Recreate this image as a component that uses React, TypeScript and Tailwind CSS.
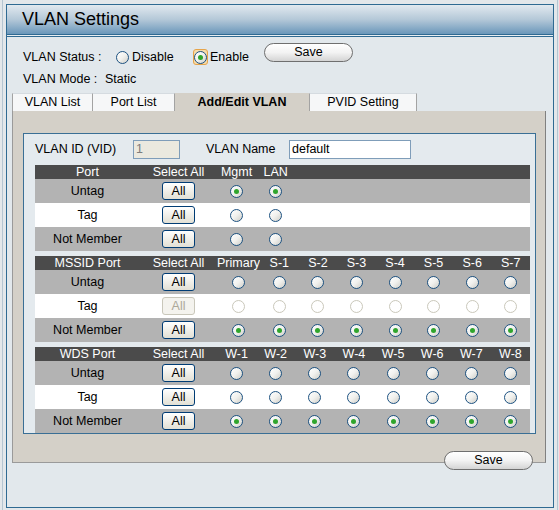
import React from "react";

type RadioState = "on" | "off" | "dis";

function Radio({ state }: { state: RadioState }) {
  if (state === "dis") {
    return <span className="block w-[13px] h-[13px] rounded-full border border-[#cac8bb] bg-white" />;
  }
  return (
    <span className="flex w-[13px] h-[13px] items-center justify-center rounded-full border border-[#1d5281] bg-linear-to-br from-white via-[#f1f1ee] to-[#cfcec8]">
      {state === "on" && <span className="block w-[5px] h-[5px] rounded-full bg-[#2fa52c]" />}
    </span>
  );
}

function AllButton({ disabled }: { disabled?: boolean }) {
  return (
    <button
      className={`w-[33px] h-[18px] rounded-[3px] border text-[12.5px] leading-[16px] ${
        disabled
          ? "border-[#c9c7ba] bg-[#f4f3ee] text-[#aca899]"
          : "border-[#003c74] bg-linear-to-b from-white to-[#e2e0d5] text-black"
      }`}
      disabled={disabled}
    >
      All
    </button>
  );
}

function SaveButton({ className = "" }: { className?: string }) {
  return (
    <button
      className={`w-[89px] h-[19px] rounded-full border border-[#6f6f6f] bg-linear-to-b from-white via-[#f3f3f3] to-[#d4d4d4] text-[12.5px] leading-[17px] text-black ${className}`}
    >
      Save
    </button>
  );
}

const sections: { title: string; cols: string[]; rows: { label: string; state: RadioState }[] }[] = [
  {
    title: "Port",
    cols: ["Mgmt", "LAN"],
    rows: [
      { label: "Untag", state: "on" },
      { label: "Tag", state: "off" },
      { label: "Not Member", state: "off" },
    ],
  },
  {
    title: "MSSID Port",
    cols: ["Primary", "S-1", "S-2", "S-3", "S-4", "S-5", "S-6", "S-7"],
    rows: [
      { label: "Untag", state: "off" },
      { label: "Tag", state: "dis" },
      { label: "Not Member", state: "on" },
    ],
  },
  {
    title: "WDS Port",
    cols: ["W-1", "W-2", "W-3", "W-4", "W-5", "W-6", "W-7", "W-8"],
    rows: [
      { label: "Untag", state: "off" },
      { label: "Tag", state: "off" },
      { label: "Not Member", state: "on" },
    ],
  },
];

function Section({ s, first }: { s: (typeof sections)[number]; first?: boolean }) {
  const blanks = Array.from({ length: 8 - s.cols.length });
  return (
    <div className={`grid w-[495px] grid-cols-[105px_77px_repeat(8,1fr)] ${first ? "" : "mt-[5px]"}`}>
      <div className="h-[14px] bg-[#4b4b4b] text-center leading-[15px] text-white">{s.title}</div>
      <div className="h-[14px] bg-[#4b4b4b] text-center leading-[15px] text-white">Select All</div>
      {s.cols.map((c) => (
        <div key={c} className="h-[14px] bg-[#4b4b4b] text-center leading-[15px] text-white">
          {c}
        </div>
      ))}
      {blanks.map((_, i) => (
        <div key={"h" + i} className="h-[14px] bg-[#4b4b4b]" />
      ))}
      {s.rows.map((r, ri) => {
        const bg = ri === 1 ? "bg-white" : "bg-[#b3b3b3]";
        return (
          <React.Fragment key={r.label}>
            <div className={`h-[24px] ${bg} flex items-center justify-center`}>{r.label}</div>
            <div className={`h-[24px] ${bg} flex items-center justify-center`}>
              <AllButton disabled={r.state === "dis"} />
            </div>
            {s.cols.map((c) => (
              <div key={c} className={`h-[24px] ${bg} flex items-center justify-center`}>
                <Radio state={r.state} />
              </div>
            ))}
            {blanks.map((_, i) => (
              <div key={"b" + i} className={`h-[24px] ${bg}`} />
            ))}
          </React.Fragment>
        );
      })}
    </div>
  );
}

export default function App() {
  return (
    <div className="w-[559px] h-[510px] overflow-hidden bg-[#e3e7ea] font-['Liberation_Sans',Arial,sans-serif] text-[12.5px] text-black">
      <div className="ml-[2px] mr-[1px] h-full border-x border-[#b5c5d1] px-[3px] pt-[4px]">
        <div className="flex h-[504px] flex-col border border-[#2f6a92] bg-[#e2e8ec]">
          <div className="flex h-[29px] items-center bg-linear-to-b from-[#e2e9ef] via-[#b4c8d8] to-[#6a97ba] pl-[15px] text-[18px]">
            VLAN Settings
          </div>
          <div className="h-[1px] bg-[#2f6a92]" />
          <div className="h-[1px] bg-[#e8eef2]" />
          <div className="h-[1px] bg-[#2f6a92]" />

          <div className="mt-[6px] flex h-[24px] items-start pl-[16px]">
            <div className="mt-[6px] flex h-[16px] items-center">
              <span className="w-[93px]">VLAN Status :</span>
              <span className="flex w-[77px] items-center">
                <Radio state="off" />
                <span className="ml-[3px]">Disable</span>
              </span>
              <span className="flex w-[71px] items-center">
                <span className="flex h-[16px] w-[15px] items-center justify-center rounded-[3px] border border-[#e6a44a] bg-[#f7dcaa]">
                  <Radio state="on" />
                </span>
                <span className="ml-[2px]">Enable</span>
              </span>
            </div>
            <SaveButton />
          </div>

          <div className="mt-[4px] flex h-[16px] items-center pl-[16px]">
            <span className="w-[82px]">VLAN Mode :</span>
            <span>Static</span>
          </div>

          <div className="mt-[6px] ml-[5px] flex h-[18px]">
            <div className="flex w-[81px] items-center justify-center border-x border-t border-[#a3a3a3] border-t-[#d5dbe0] bg-[#f6f7f8]">
              VLAN List
            </div>
            <div className="flex w-[82px] items-center justify-center border-r border-t border-[#a3a3a3] border-t-[#d5dbe0] bg-[#f6f7f8]">
              Port List
            </div>
            <div className="flex w-[134px] items-center justify-center bg-[#d4d0c8] font-bold">Add/Edit VLAN</div>
            <div className="flex w-[108px] items-center justify-center border-x border-t border-[#a3a3a3] border-t-[#d5dbe0] bg-[#f6f7f8]">
              PVID Setting
            </div>
          </div>

          <div className="ml-[5px] w-[534px] border-x border-b border-[#9a9a9a] border-r-[#808080] bg-[#d4d0c8] pt-[22px] pb-[28px] pl-[10px]">
            <div className="w-[513px] border border-[#3a6f95] bg-[#e4eaee] pt-[6px] pl-[11px]">
              <div className="flex h-[19px] items-center">
                <span className="w-[98px]">VLAN ID (VID)</span>
                <span className="flex h-[19px] w-[47px] items-center border border-[#7f9db9] bg-[#ebe9df] pl-[2px] text-[#7d7d7d]">
                  1
                </span>
                <span className="ml-[26px] w-[83px]">VLAN Name</span>
                <span className="flex h-[19px] w-[122px] items-center border border-[#7f9db9] bg-white pl-[2px]">
                  default
                </span>
              </div>
              <div className="mt-[6px]">
                {sections.map((s, i) => (
                  <Section key={s.title} s={s} first={i === 0} />
                ))}
              </div>
            </div>
          </div>

          <div className="relative -mt-[12px] flex justify-end pr-[20px]">
            <SaveButton />
          </div>
        </div>
      </div>
    </div>
  );
}
